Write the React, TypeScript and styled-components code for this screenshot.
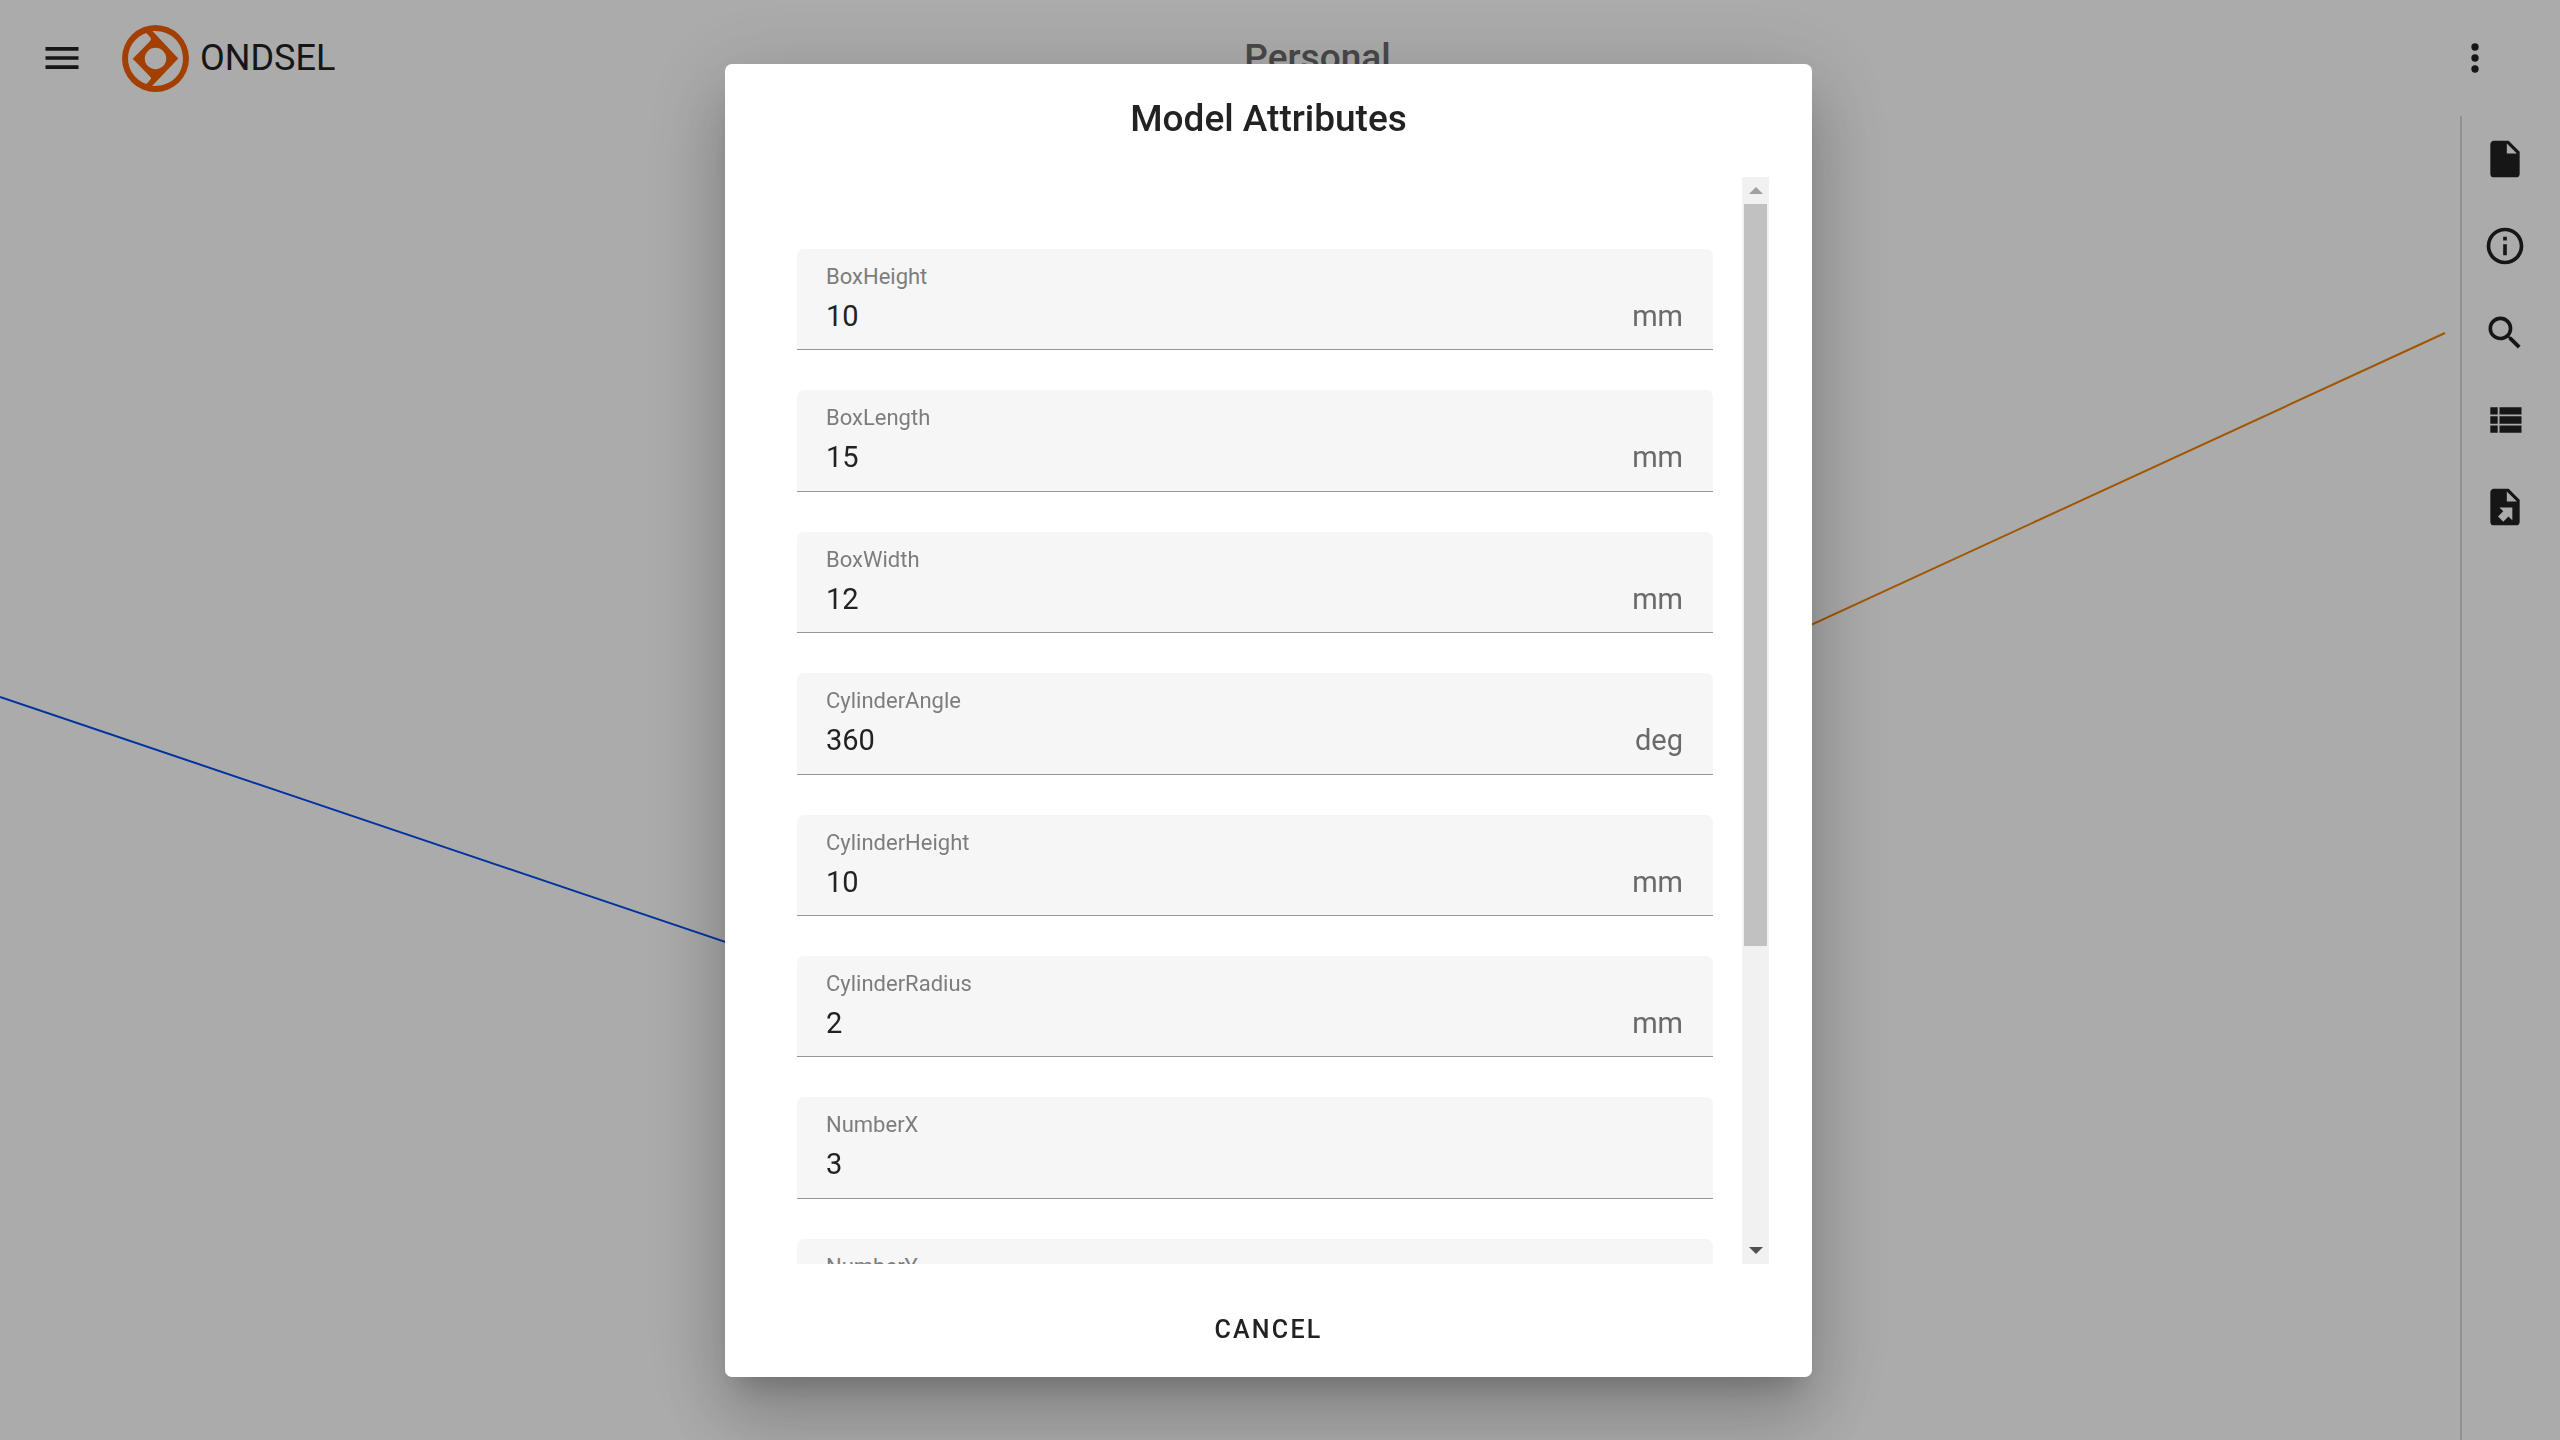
import React, { useRef } from "react";
import styled, { createGlobalStyle } from "styled-components";

const GlobalStyle = createGlobalStyle`
  *, *::before, *::after { box-sizing: border-box; }
  body {
    margin: 0;
    font-family: Roboto, "Liberation Sans", sans-serif;
    color: #222;
    background: #fff;
    overflow: hidden;
  }
  button { font: inherit; color: inherit; background: none; border: 0; padding: 0; cursor: pointer; }
`;

const Page = styled.div`
  height: 100vh;
  display: flex;
  flex-direction: column;
`;

const TopBar = styled.header`
  flex: none;
  height: 116px;
  display: grid;
  grid-template-columns: auto 1fr auto 1fr;
  align-items: center;
  padding: 0 47px 0 24px;
`;

const BrandLink = styled.a`
  justify-self: start;
  display: flex;
  align-items: center;
  gap: 11px;
  color: inherit;
  text-decoration: none;
  font-size: 36px;
  line-height: 44px;
`;

const Workspace = styled.h1`
  margin: 0;
  font-size: 37px;
  line-height: 44px;
  font-weight: 500;
  color: #6c6c6c;
`;

const IconButton = styled.button`
  display: flex;
  align-items: center;
  justify-content: center;
  width: 76px;
  height: 44px;
`;

const BarStart = styled.div`
  padding-right: 22px;
`;

const BarEnd = styled.div`
  display: flex;
  justify-content: flex-end;
`;

const Main = styled.main`
  flex: 1;
  min-height: 0;
  display: flex;
`;

const Viewport = styled.div`
  flex: 1;
  min-width: 0;
  display: flex;
`;

const Scene = styled.svg`
  width: 100%;
  height: 100%;
`;

const Rail = styled.nav`
  flex: none;
  width: 100px;
  border-left: 2px solid #d8d8d8;
  display: flex;
  flex-direction: column;
  align-items: center;
  gap: 43px;
  padding: 21px 12px 0 0;
`;

const Scrim = styled.div`
  position: fixed;
  inset: 0;
  display: flex;
  justify-content: center;
  padding: 64px 23px 63px 0;
  background: rgba(0, 0, 0, 0.33);
`;

const Dialog = styled.section`
  width: 1087px;
  max-width: 100%;
  display: flex;
  flex-direction: column;
  background: #fff;
  border-radius: 7px;
  box-shadow:
    0 20px 27px -13px rgba(0, 0, 0, 0.2),
    0 43px 69px 5px rgba(0, 0, 0, 0.14),
    0 16px 83px 14px rgba(0, 0, 0, 0.12);
`;

const DialogTitle = styled.h2`
  flex: none;
  margin: 0;
  height: 113px;
  padding-top: 33px;
  text-align: center;
  font-size: 37px;
  line-height: 44px;
  font-weight: 500;
`;

const DialogBody = styled.div`
  flex: 1;
  min-height: 0;
  display: flex;
  padding: 0 43px 0 72px;
`;

const ScrollArea = styled.div`
  flex: 1;
  min-width: 0;
  overflow-y: auto;
  scrollbar-width: none;
  padding: 72px 29px 0 0;
`;

const FieldList = styled.form`
  display: grid;
  grid-auto-rows: 1fr;
  row-gap: 40px;
  min-height: 1091px;
`;

const Field = styled.div`
  display: flex;
  flex-direction: column;
  gap: 8px;
  padding: 15px 30px 0 29px;
  background: #f6f6f6;
  border-bottom: 1px solid #979797;
  border-radius: 7px 7px 0 0;
`;

const FieldLabel = styled.label`
  font-size: 22px;
  line-height: 26px;
  color: #7d7d7d;
`;

const FieldRow = styled.div`
  display: flex;
  font-size: 29px;
  line-height: 36px;
`;

const FieldInput = styled.input`
  flex: 1;
  min-width: 0;
  height: 36px;
  padding: 0;
  border: 0;
  outline: 0;
  background: none;
  font: inherit;
  color: #222;
`;

const Unit = styled.span`
  color: #6a6a6a;
`;

const ScrollBar = styled.div`
  flex: none;
  width: 27px;
  display: flex;
  flex-direction: column;
  background: #f1f1f1;
`;

const ScrollStep = styled.button<{ $dim?: boolean }>`
  flex: none;
  height: 27px;
  display: flex;
  align-items: center;
  justify-content: center;
  color: ${(p) => (p.$dim ? "#a0a0a0" : "#505050")};
`;

const ScrollTrack = styled.div`
  flex: 1;
  padding: 0 2px;
`;

const ScrollThumb = styled.div`
  height: 71.8%;
  background: #c1c1c1;
`;

const DialogActions = styled.footer`
  flex: none;
  height: 113px;
  display: flex;
  align-items: flex-start;
  justify-content: center;
  padding-top: 33px;
`;

const TextButton = styled.button`
  padding: 0 29px;
  height: 65px;
  font-size: 25px;
  line-height: 30px;
  font-weight: 500;
  letter-spacing: 0.09em;
  text-transform: uppercase;
`;

const paths = {
  menu: "M3,6H21V8H3V6M3,11H21V13H3V11M3,16H21V18H3V16Z",
  dots: "M12,16A2,2 0 0,1 14,18A2,2 0 0,1 12,20A2,2 0 0,1 10,18A2,2 0 0,1 12,16M12,10A2,2 0 0,1 14,12A2,2 0 0,1 12,14A2,2 0 0,1 10,12A2,2 0 0,1 12,10M12,4A2,2 0 0,1 14,6A2,2 0 0,1 12,8A2,2 0 0,1 10,6A2,2 0 0,1 12,4Z",
  file: "M13,9V3.5L18.5,9M6,2C4.89,2 4,2.89 4,4V20A2,2 0 0,0 6,22H18A2,2 0 0,0 20,20V8L14,2H6Z",
  info: "M11,9H13V7H11M12,20C7.59,20 4,16.41 4,12C4,7.59 7.59,4 12,4C16.41,4 20,7.59 20,12C20,16.41 16.41,20 12,20M12,2A10,10 0 0,0 2,12A10,10 0 0,0 12,22A10,10 0 0,0 22,12A10,10 0 0,0 12,2M11,17H13V11H11V17Z",
  search:
    "M9.5,3A6.5,6.5 0 0,1 16,9.5C16,11.11 15.41,12.59 14.44,13.73L14.71,14H15.5L20.5,19L19,20.5L14,15.5V14.71L13.73,14.44C12.59,15.41 11.11,16 9.5,16A6.5,6.5 0 0,1 3,9.5A6.5,6.5 0 0,1 9.5,3M9.5,5C7,5 5,7 5,9.5C5,12 7,14 9.5,14C12,14 14,12 14,9.5C14,7 12,5 9.5,5Z",
  list: "M9,5V9H21V5M9,19H21V15H9M9,14H21V10H9M4,9H8V5H4M4,19H8V15H4M4,14H8V10H4V14Z",
  export:
    "M6,2C4.89,2 4,2.9 4,4V20A2,2 0 0,0 6,22H18A2,2 0 0,0 20,20V8L14,2M13,3.5L18.5,9H13M8.93,12.22H16V19.29L13.88,17.17L11.05,20L8.22,17.17L11.05,14.35",
};

type IconName = keyof typeof paths;

const Icon = ({ name }: { name: IconName }) => (
  <svg width="44" height="44" viewBox="0 0 24 24" fill="currentColor" aria-hidden="true">
    <path d={paths[name]} />
  </svg>
);

const Logo = () => (
  <svg width="67" height="67" viewBox="0 0 200 200" fill="#f46000" aria-hidden="true">
    <path
      fillRule="evenodd"
      d="M100 0A100 100 0 1 1 100 200A100 100 0 1 1 100 0Z
         M91 18L168 100L90 182C150 184 182 145 182 100C182 55 150 16 91 18Z
         M72 24C40 36 18 65 18 100C18 135 40 164 72 176Q80 170 87 160Q86 156 82 152L32 101L82 50Q86 46 87 42Q80 30 72 24Z
         M100 68A32 32 0 1 0 100 132A32 32 0 1 0 100 68Z"
    />
  </svg>
);

const tools: { icon: IconName; label: string }[] = [
  { icon: "file", label: "File" },
  { icon: "info", label: "Info" },
  { icon: "search", label: "Search" },
  { icon: "list", label: "Attributes" },
  { icon: "export", label: "Export" },
];

const attributes = [
  { name: "BoxHeight", value: "10", unit: "mm" },
  { name: "BoxLength", value: "15", unit: "mm" },
  { name: "BoxWidth", value: "12", unit: "mm" },
  { name: "CylinderAngle", value: "360", unit: "deg" },
  { name: "CylinderHeight", value: "10", unit: "mm" },
  { name: "CylinderRadius", value: "2", unit: "mm" },
  { name: "NumberX", value: "3", unit: "" },
  { name: "NumberY", value: "", unit: "" },
];

export default function App() {
  const area = useRef<HTMLDivElement>(null);
  const step = (dy: number) => area.current?.scrollBy({ top: dy });

  return (
    <>
      <GlobalStyle />
      <Page>
        <TopBar>
          <BarStart>
            <IconButton aria-label="Menu">
              <Icon name="menu" />
            </IconButton>
          </BarStart>
          <BrandLink href="#">
            <Logo />
            ONDSEL
          </BrandLink>
          <Workspace>Personal</Workspace>
          <BarEnd>
            <IconButton aria-label="More">
              <Icon name="dots" />
            </IconButton>
          </BarEnd>
        </TopBar>
        <Main>
          <Viewport>
            <Scene viewBox="0 0 2460 1324" preserveAspectRatio="none" aria-hidden="true">
              <line x1="0" y1="581" x2="1220" y2="993" stroke="#004cee" strokeWidth="2" />
              <line x1="1220" y1="781" x2="2445" y2="217" stroke="#f08000" strokeWidth="2" />
            </Scene>
          </Viewport>
          <Rail>
            {tools.map((t) => (
              <IconButton key={t.icon} aria-label={t.label}>
                <Icon name={t.icon} />
              </IconButton>
            ))}
          </Rail>
        </Main>
      </Page>

      <Scrim>
        <Dialog role="dialog" aria-modal="true" aria-labelledby="dialog-title">
          <DialogTitle id="dialog-title">Model Attributes</DialogTitle>
          <DialogBody>
            <ScrollArea ref={area}>
              <FieldList>
                {attributes.map((a) => (
                  <Field key={a.name}>
                    <FieldLabel htmlFor={a.name}>{a.name}</FieldLabel>
                    <FieldRow>
                      <FieldInput id={a.name} defaultValue={a.value} />
                      {a.unit && <Unit>{a.unit}</Unit>}
                    </FieldRow>
                  </Field>
                ))}
              </FieldList>
            </ScrollArea>
            <ScrollBar>
              <ScrollStep $dim aria-label="Scroll up" onClick={() => step(-80)}>
                <svg width="14" height="7" viewBox="0 0 14 7" fill="currentColor">
                  <path d="M7 0L14 7H0Z" />
                </svg>
              </ScrollStep>
              <ScrollTrack>
                <ScrollThumb />
              </ScrollTrack>
              <ScrollStep aria-label="Scroll down" onClick={() => step(80)}>
                <svg width="14" height="7" viewBox="0 0 14 7" fill="currentColor">
                  <path d="M0 0H14L7 7Z" />
                </svg>
              </ScrollStep>
            </ScrollBar>
          </DialogBody>
          <DialogActions>
            <TextButton>Cancel</TextButton>
          </DialogActions>
        </Dialog>
      </Scrim>
    </>
  );
}
